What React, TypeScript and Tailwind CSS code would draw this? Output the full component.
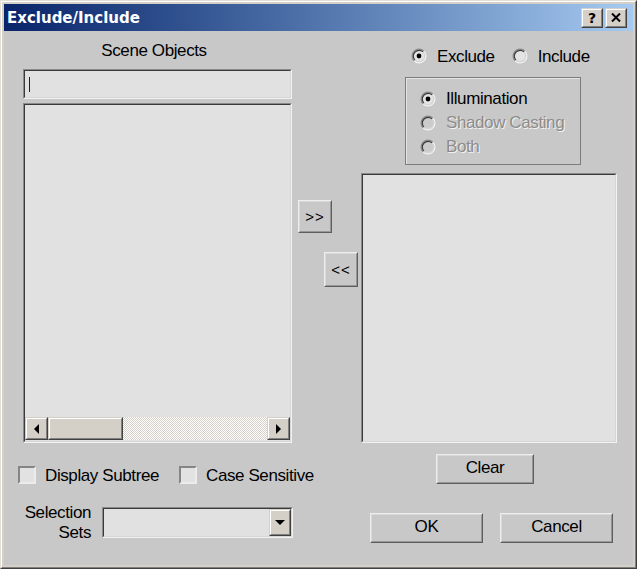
import React from "react";

type BoxProps = {
  className?: string;
  children?: React.ReactNode;
};

// sunken edit / list field
const Sunken: React.FC<BoxProps> = ({ className = "", children }) => {
  return (
    <div className={`border border-t-[#8a8a8a] border-l-[#8a8a8a] border-b-[#f2f2f2] border-r-[#f2f2f2] ${className}`}>
      <div className="flex h-full w-full flex-col border border-t-[#3a3a3a] border-l-[#3a3a3a] border-b-[#d6d6d6] border-r-[#d6d6d6] bg-[#e1e1e1]">
        {children}
      </div>
    </div>
  );
};

// flat gray push button
const Button: React.FC<BoxProps & { text?: boolean }> = ({ className = "", children, text }) => {
  return (
    <div className={`border border-t-[#eeeeee] border-l-[#eeeeee] border-b-[#5e5e5e] border-r-[#5e5e5e] ${className}`}>
      <div
        className={`flex h-full w-full items-center justify-center border border-t-[#d8d8d8] border-l-[#d8d8d8] border-b-[#979797] border-r-[#979797] bg-[#c8c8c8] ${
          text ? "pb-[3px]" : ""
        }`}
      >
        {children}
      </div>
    </div>
  );
};

// classic 3d button (scroll arrows, caption buttons)
const Classic: React.FC<BoxProps> = ({ className = "", children }) => {
  return (
    <div className={`border border-t-[#d4d0c8] border-l-[#d4d0c8] border-b-[#404040] border-r-[#404040] ${className}`}>
      <div className="flex h-full w-full items-center justify-center border border-t-[#ffffff] border-l-[#ffffff] border-b-[#808080] border-r-[#808080] bg-[#d4d0c8]">
        {children}
      </div>
    </div>
  );
};

const Radio: React.FC<{ checked?: boolean; disabled?: boolean }> = ({ checked, disabled }) => {
  return (
    <svg width="16" height="16" viewBox="0 0 16 16" className="shrink-0">
      <circle cx="8" cy="8" r="6.5" fill={disabled ? "#cbcbcb" : "#e4e4e4"} />
      <path d="M3.1 12.9 A6.9 6.9 0 0 1 12.9 3.1" stroke="#8a8a8a" strokeWidth="1.2" fill="none" />
      <path d="M3.9 12.1 A5.8 5.8 0 0 1 12.1 3.9" stroke="#3c3c3c" strokeWidth="1.2" fill="none" />
      <path d="M12.9 3.1 A6.9 6.9 0 0 1 3.1 12.9" stroke="#f4f4f4" strokeWidth="1.2" fill="none" />
      <path d="M12.1 3.9 A5.8 5.8 0 0 1 3.9 12.1" stroke="#d4d4d4" strokeWidth="1.2" fill="none" />
      {checked && <circle cx="8" cy="8" r="2.4" fill="#000000" />}
    </svg>
  );
};

const Checkbox: React.FC = () => {
  return (
    <div className="h-[18px] w-[18px] shrink-0 border-2 border-t-[#858585] border-l-[#858585] border-b-[#ececec] border-r-[#ececec] bg-[#e2e2e2]" />
  );
};

const Arrow: React.FC<{ dir: "left" | "right" | "down" }> = ({ dir }) => {
  const pts = dir === "left" ? "7,0 2,5 7,10" : dir === "right" ? "2,0 7,5 2,10" : "0,2 10,2 5,7";
  return (
    <svg width="10" height="10" viewBox="0 0 10 10">
      <polygon points={pts} fill="#000000" />
    </svg>
  );
};

const disabledText = "text-[#8c8c8c] [text-shadow:1px_1px_0_#f2f2f2]";

export default function App() {
  return (
    <div className="h-[569px] w-[637px] border border-t-[#e2dfd7] border-l-[#e2dfd7] border-b-[#404040] border-r-[#404040] font-['Liberation_Sans',Arial,sans-serif] text-[17px] leading-[20px] tracking-[-0.4px] text-black">
      <div className="flex h-full w-full flex-col border border-t-[#ffffff] border-l-[#ffffff] border-b-[#808080] border-r-[#808080] bg-[#d4d0c8] p-[2px]">
        {/* title bar */}
        <div className="flex h-[27px] shrink-0 items-center bg-linear-to-r from-[#0a246a] to-[#a6caf0] pl-[3px] pr-[6px]">
          <span className="font-['DejaVu_Sans',sans-serif] text-[15px] font-bold tracking-normal text-white">Exclude/Include</span>
          <div className="ml-auto flex gap-[2px]">
            <Classic className="h-[20px] w-[22px]">
              <span className="font-['DejaVu_Sans',sans-serif] text-[14px] font-bold leading-none tracking-normal">?</span>
            </Classic>
            <Classic className="h-[20px] w-[22px]">
              <svg width="10" height="9" viewBox="0 0 10 9">
                <path d="M1 0.5 L9 8.5 M9 0.5 L1 8.5" stroke="#000000" strokeWidth="2" />
              </svg>
            </Classic>
          </div>
        </div>

        {/* dialog body */}
        <div className="flex flex-1 bg-[#c8c8c8] pl-[14px]">
          {/* scene objects */}
          <div className="flex w-[275px] shrink-0 flex-col">
            <div className="mt-[10px] h-[20px] pl-[5px] pr-[8px] text-center">Scene Objects</div>
            <Sunken className="ml-[5px] mt-[8px] h-[30px] w-[269px]">
              <span className="ml-[4px] mt-[6px] h-[15px] w-px bg-[#202020]" />
            </Sunken>
            <Sunken className="ml-[5px] mt-[4px] h-[340px] w-[269px]">
              <div className="flex-1" />
              <div className="mb-px flex h-[23px]">
                <Classic className="h-full w-[23px]">
                  <Arrow dir="left" />
                </Classic>
                <Classic className="h-full w-[75px]" />
                <div className="flex-1 bg-[repeating-conic-gradient(#ffffff_0_25%,#d4d0c8_0_50%)] bg-[length:2px_2px]" />
                <Classic className="h-full w-[23px]">
                  <Arrow dir="right" />
                </Classic>
              </div>
            </Sunken>

            <div className="mt-[22px] flex h-[20px] items-center whitespace-nowrap">
              <div className="flex w-[161px] shrink-0 items-center">
                <Checkbox />
                <span className="ml-[9px] pt-[2px]">Display Subtree</span>
              </div>
              <div className="flex shrink-0 items-center">
                <Checkbox />
                <span className="ml-[9px] pt-[2px]">Case Sensitive</span>
              </div>
            </div>

            <div className="mt-[18px] flex">
              <div className="w-[73px] shrink-0 text-right">
                Selection
                <br />
                Sets
              </div>
              <Sunken className="ml-[11px] mt-[4px] h-[31px] w-[191px] shrink-0">
                <div className="flex h-full justify-end">
                  <Classic className="h-full w-[22px]">
                    <Arrow dir="down" />
                  </Classic>
                </div>
              </Sunken>
            </div>
          </div>

          {/* move buttons */}
          <div className="flex w-[65px] shrink-0 flex-col text-[15px] tracking-[1px]">
            <Button className="ml-[5px] mt-[169px] h-[33px] w-[34px]">&gt;&gt;</Button>
            <Button className="ml-[31px] mt-[19px] h-[35px] w-[34px]">&lt;&lt;</Button>
          </div>

          {/* exclude / include */}
          <div className="ml-[3px] flex w-[256px] shrink-0 flex-col">
            <div className="mt-[15px] flex h-[20px] items-center pl-[50px]">
              <Radio checked />
              <span className="ml-[10px] pt-px">Exclude</span>
              <span className="ml-[17px]">
                <Radio />
              </span>
              <span className="ml-[10px] pt-px">Include</span>
            </div>

            <div className="ml-[44px] mt-[11px] flex h-[88px] w-[176px] flex-col border border-[#7c7c7c] pl-[14px] pt-[11px] shadow-[inset_1px_1px_0_#e4e4e4]">
              <div className="flex h-[24px] items-start">
                <span className="mt-[2px]">
                  <Radio checked />
                </span>
                <span className="ml-[10px]">Illumination</span>
              </div>
              <div className="flex h-[24px] items-start">
                <span className="mt-[2px]">
                  <Radio disabled />
                </span>
                <span className={`ml-[10px] ${disabledText}`}>Shadow Casting</span>
              </div>
              <div className="flex h-[24px] items-start">
                <span className="mt-[2px]">
                  <Radio disabled />
                </span>
                <span className={`ml-[10px] ${disabledText}`}>Both</span>
              </div>
            </div>

            <Sunken className="mt-[8px] h-[270px] w-[256px]" />

            <Button text className="ml-[75px] mt-[11px] h-[30px] w-[98px]">
              Clear
            </Button>

            <div className="ml-[9px] mt-[29px] flex gap-[17px]">
              <Button text className="h-[30px] w-[113px]">
                OK
              </Button>
              <Button text className="h-[30px] w-[113px]">
                Cancel
              </Button>
            </div>
          </div>
        </div>
      </div>
    </div>
  );
}
